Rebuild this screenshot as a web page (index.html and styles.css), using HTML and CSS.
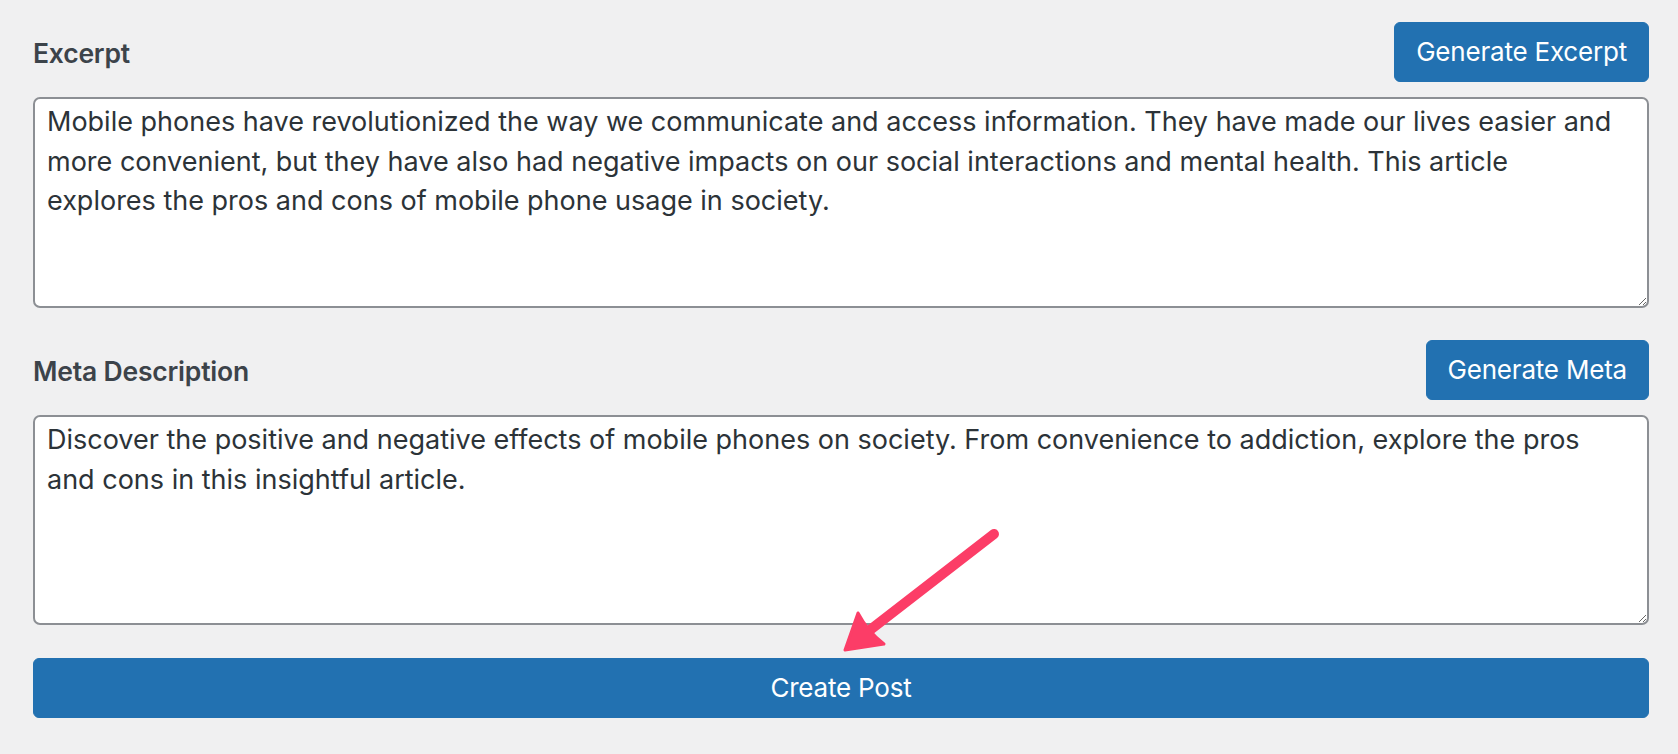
FILE: index.html
```html
<!DOCTYPE html>
<html lang="en">
<head>
<meta charset="utf-8">
<title>Post Details</title>
<link rel="stylesheet" href="styles.css">
</head>
<body>
<div class="panel">
  <div class="field">
    <div class="field-head">
      <label class="field-label" for="excerpt">Excerpt</label>
      <button class="btn btn-primary" type="button">Generate Excerpt</button>
    </div>
    <textarea id="excerpt" class="field-input field-input--excerpt">Mobile phones have revolutionized the way we communicate and access information. They have made our lives easier and more convenient, but they have also had negative impacts on our social interactions and mental health. This article explores the pros and cons of mobile phone usage in society.</textarea>
  </div>
  <div class="field">
    <div class="field-head">
      <label class="field-label" for="meta">Meta Description</label>
      <button class="btn btn-primary" type="button">Generate Meta</button>
    </div>
    <textarea id="meta" class="field-input field-input--meta">Discover the positive and negative effects of mobile phones on society. From convenience to addiction, explore the pros and cons in this insightful article.</textarea>
  </div>
  <div class="submit-row">
    <button class="btn btn-primary btn-block" type="button">Create Post</button>
  </div>
  <svg class="annotation-arrow" width="180" height="145" viewBox="0 0 180 145" aria-hidden="true">
    <line x1="164" y1="14" x2="40" y2="110" stroke="#fc3d67" stroke-width="10" stroke-linecap="round"/>
    <path d="M15 130 L28 93 Q38 112 54 124 Z" fill="#fc3d67" stroke="#fc3d67" stroke-width="3" stroke-linejoin="round"/>
  </svg>
</div>
</body>
</html>
```

FILE: styles.css
```css
* {
  box-sizing: border-box;
}

html, body {
  margin: 0;
  padding: 0;
  background: #f0f0f1;
}

body {
  font-family: Inter, "Noto Sans", "Liberation Sans", sans-serif;
  color: #2c3338;
}

.panel {
  position: relative;
  padding: 22px 29px 36px 33px;
  display: flex;
  flex-direction: column;
}

.field {
  display: flex;
  flex-direction: column;
  margin-bottom: 32px;
}

.field-head {
  display: flex;
  align-items: center;
  justify-content: space-between;
  height: 60px;
  margin-bottom: 15px;
}

.field-label {
  font-size: 26.5px;
  font-weight: 600;
  color: #3c434a;
  letter-spacing: -0.2px;
  padding-top: 2px;
}

.btn {
  font-family: inherit;
  font-size: 26px;
  line-height: 58px;
  height: 60px;
  padding: 0 21px;
  border-radius: 6px;
  border: 1px solid #2271b1;
  cursor: pointer;
  letter-spacing: -0.2px;
}

.btn-primary {
  background: #2271b1;
  color: #ffffff;
}

.btn-block {
  width: 100%;
  text-align: center;
}

.field-input {
  display: block;
  width: 100%;
  font-family: inherit;
  font-size: 27px;
  line-height: 39.5px;
  color: #2c3338;
  background: #ffffff;
  border: 2px solid #8c8f94;
  border-radius: 7px;
  padding: 3px 28px 3px 12px;
  letter-spacing: 0;
  resize: both;
  overflow: auto;
}

.field-input--excerpt {
  height: 211px;
}

.field-input--meta {
  height: 210px;
}

.submit-row {
  margin-top: 1px;
}

.annotation-arrow {
  position: absolute;
  left: 830px;
  top: 520px;
}
```
